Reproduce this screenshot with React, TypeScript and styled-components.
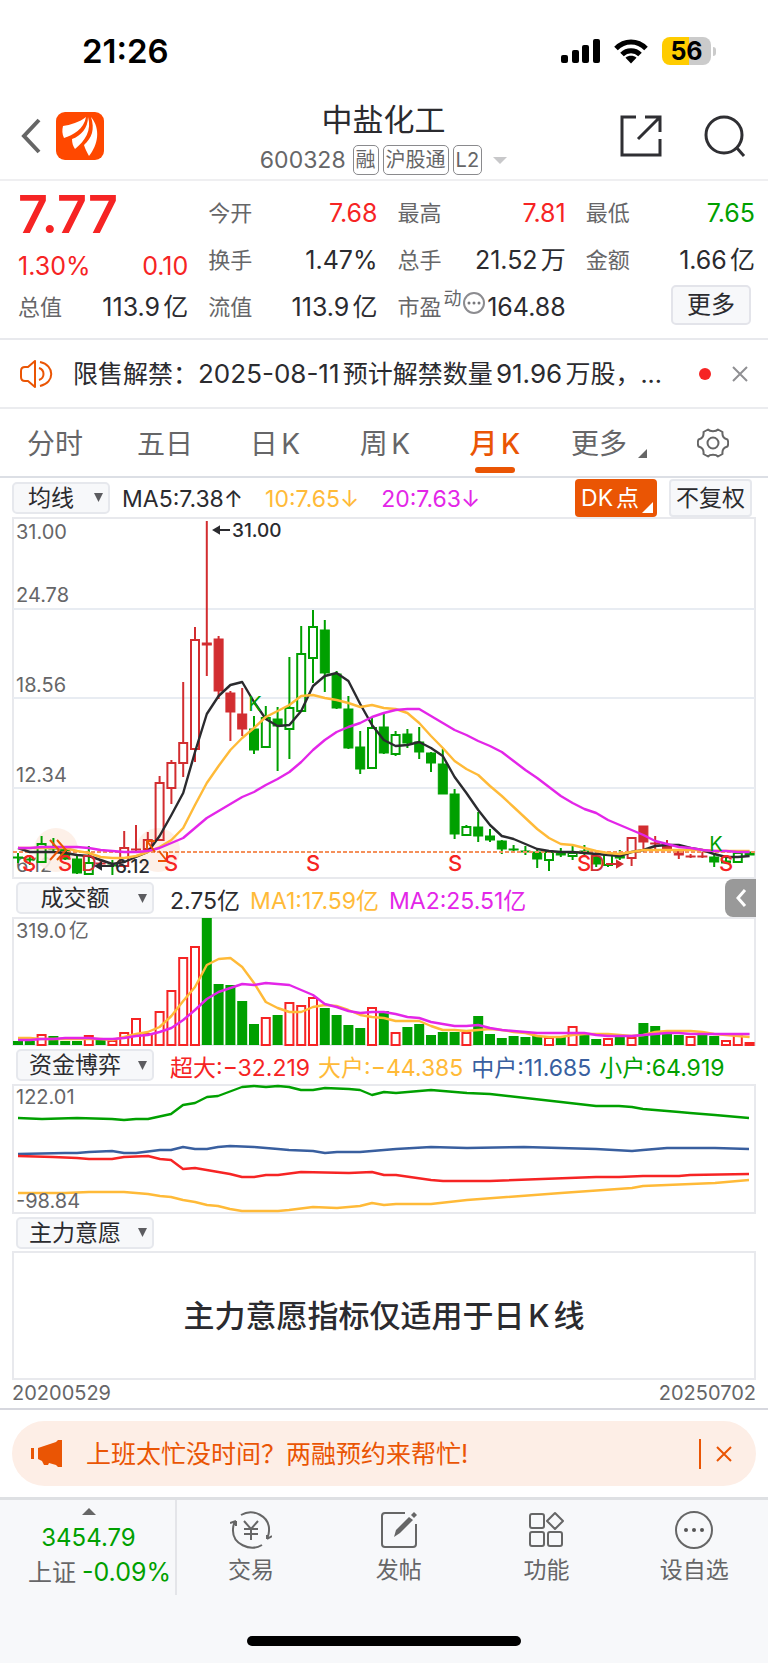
import React from "react";
import styled, { createGlobalStyle } from "styled-components";

const color = {
  ink: "#2b2b2f",
  gray: "#666668",
  red: "#f62424",
  candleRed: "#d22d30",
  green: "#00a000",
  orange: "#ea5504",
  amber: "#ffba38",
  magenta: "#e326e8",
  blue: "#395f9f",
  line: "#e8e9ed",
  soft: "#f7f8fa",
};

const GlobalStyle = createGlobalStyle`
  * { box-sizing: border-box; }
  body {
    margin: 0;
    background: #fff;
    color: ${color.ink};
    font-family: Inter, "Noto Sans CJK SC", sans-serif;
    font-size: 24px;
    text-autospace: normal;
  }
  button, select {
    margin: 0;
    padding: 0;
    border: 0;
    background: none;
    color: inherit;
    font: inherit;
    text-autospace: inherit;
    cursor: pointer;
  }
  a { color: inherit; text-decoration: none; }
  svg { display: block; flex: none; }
`;

const Page = styled.div`
  display: flex;
  flex-direction: column;
  min-height: 100vh;
`;

/* ---------- status bar ---------- */

const StatusBar = styled.div`
  display: flex;
  align-items: center;
  justify-content: space-between;
  height: 92px;
  padding: 10px 52px 0 82px;
  color: #000;
`;

const Clock = styled.time`
  font-size: 33px;
  font-weight: 600;
`;

const StatusIcons = styled.div`
  display: flex;
  align-items: center;
  gap: 14px;
`;

const Battery = styled.div`
  display: flex;
  align-items: center;
  gap: 2px;
`;

const BatteryBody = styled.div`
  width: 49px;
  height: 28px;
  border-radius: 8px;
  background: linear-gradient(to right, #ffcc00 56%, #cbcbcb 56%);
  font-size: 25px;
  font-weight: 700;
  line-height: 28px;
  text-align: center;
`;

const BatteryTip = styled.div`
  width: 3px;
  height: 9px;
  border-radius: 0 3px 3px 0;
  background: #cbcbcb;
`;

/* ---------- header ---------- */

const Header = styled.header`
  display: grid;
  grid-template-columns: 1fr auto 1fr;
  align-items: center;
  height: 89px;
  padding: 0 22px 0 21px;
  border-bottom: 2px solid #efeff1;
`;

const HeaderSide = styled.div<{ $end?: boolean }>`
  display: flex;
  align-items: center;
  justify-content: ${(p) => (p.$end ? "flex-end" : "flex-start")};
  gap: ${(p) => (p.$end ? 42 : 15)}px;
`;

const Heading = styled.div`
  display: flex;
  flex-direction: column;
  align-items: center;
  gap: 7px;
  padding-top: 6px;
`;

const StockName = styled.h1`
  margin: 0;
  font-size: 31px;
  font-weight: 400;
  line-height: 36px;
`;

const CodeLine = styled.div`
  display: flex;
  align-items: center;
  gap: 4px;
  color: ${color.gray};
  font-size: 23px;
  line-height: 30px;
`;

const Code = styled.span`
  padding-right: 3px;
`;

const Tag = styled.span`
  padding: 0 2px;
  border: 1px solid #8a8a8d;
  border-radius: 5px;
  font-size: 20px;
  line-height: 28px;
`;

const CaretButton = styled.button`
  padding-left: 7px;
`;

/* ---------- quote ---------- */

const Quote = styled.section`
  display: grid;
  grid-template-columns: 170fr 169fr 168fr 169fr;
  column-gap: 20px;
  height: 159px;
  padding: 8px 13px 8px 18px;
  border-bottom: 2px solid ${color.line};
`;

const QuoteColumn = styled.div`
  display: flex;
  flex-direction: column;
`;

const Price = styled.strong`
  height: 60px;
  color: ${color.red};
  font-size: 52px;
  font-weight: 600;
  line-height: 52px;
`;

const QuoteRow = styled.div<{ $tone?: string; $short?: boolean }>`
  display: flex;
  align-items: center;
  justify-content: space-between;
  height: ${(p) => (p.$short ? 34 : 47)}px;
  color: ${(p) => p.$tone ?? color.ink};
  font-size: 25px;
  line-height: 30px;
  white-space: nowrap;
`;

const QuoteLabel = styled.span`
  display: flex;
  align-items: center;
  color: ${color.gray};
  font-size: 22px;
`;

const Superscript = styled.sup`
  align-self: flex-start;
  padding-left: 2px;
  font-size: 18px;
  line-height: 14px;
`;

const InfoButton = styled.button`
  padding-bottom: 8px;
`;

const MoreButton = styled.button`
  width: 80px;
  height: 40px;
  margin: 0 4px 4px auto;
  border: 2px solid #e3e4ea;
  border-radius: 5px;
  background: ${color.soft};
  font-size: 24px;
  line-height: 34px;
`;

/* ---------- notice ---------- */

const Notice = styled.section`
  display: flex;
  align-items: center;
  height: 69px;
  padding: 0 20px;
  border-bottom: 2px solid #ebecef;
  font-size: 25px;
`;

const NoticeText = styled.a`
  flex: 1;
  margin-left: 20px;
  padding-bottom: 4px;
  overflow: hidden;
  text-overflow: ellipsis;
  white-space: nowrap;
`;

const Figure = styled.span`
  font-size: 26px;
`;

const Dot = styled.span`
  width: 12px;
  height: 12px;
  margin: 0 21px 0 24px;
  border-radius: 50%;
  background: ${color.red};
`;

/* ---------- tabs ---------- */

const Tabs = styled.nav`
  display: grid;
  grid-template-columns: repeat(5, 110fr) 118fr 90fr;
  height: 69px;
  padding-right: 10px;
  border-bottom: 2px solid #dcdfe5;
`;

const Tab = styled.button<{ $active?: boolean }>`
  display: flex;
  flex-direction: column;
  align-items: center;
  justify-content: flex-end;
  gap: 3px;
  padding-bottom: 3px;
  color: ${(p) => (p.$active ? color.orange : color.gray)};
  font-size: 28px;
  font-weight: ${(p) => (p.$active ? 500 : 400)};
  line-height: 40px;

  &::after {
    content: "";
    width: 40px;
    height: 6px;
    border-radius: 3px;
    background: ${(p) => (p.$active ? color.orange : "transparent")};
  }
`;

const TabMore = styled.span`
  display: flex;
  align-items: flex-end;
  gap: 11px;

  svg { margin-bottom: 6px; }
`;

const SettingsButton = styled.button`
  display: grid;
  place-items: center;
`;

/* ---------- charts ---------- */

const Charts = styled.main`
  padding: 0 12px;
`;

const ToolRow = styled.div<{ $inset?: boolean; $height?: number }>`
  display: flex;
  align-items: center;
  height: ${(p) => p.$height ?? 38}px;
  padding-left: ${(p) => (p.$inset ? 4 : 0)}px;
  white-space: nowrap;
`;

const Picker = styled.label<{ $wide?: boolean }>`
  display: grid;
  align-items: center;
  width: ${(p) => (p.$wide ? 138 : 98)}px;
  height: 32px;
  border: 2px solid #e6e8ed;
  border-radius: 5px;
  background: ${color.soft};

  > select, > svg { grid-area: 1 / 1; }
  > svg { justify-self: end; margin-right: 5px; pointer-events: none; }
`;

const PickerSelect = styled.select`
  width: 100%;
  height: 28px;
  padding-right: 20px;
  appearance: none;
  font-size: 23px;
  line-height: 28px;
  text-align: center;
  text-align-last: center;
`;

const Readings = styled.div<{ $gap: number; $indent: number }>`
  display: flex;
  flex: 1;
  gap: ${(p) => p.$gap}px;
  padding: 2px 0 0 ${(p) => p.$indent}px;
  font-size: 23px;
  text-autospace: no-autospace;
`;

const Reading = styled.span<{ $tone: string }>`
  color: ${(p) => p.$tone};
`;

const DkButton = styled.button`
  display: flex;
  align-items: flex-end;
  gap: 3px;
  height: 38px;
  padding: 0 4px 0 6px;
  border-radius: 4px;
  background: ${color.orange};
  color: #fff;
  font-size: 23px;
  line-height: 38px;

  svg { margin-bottom: 4px; }
`;

const AdjustButton = styled.button`
  height: 38px;
  margin: 0 4px 0 12px;
  padding: 0 5px;
  border: 2px solid #e6e8ed;
  border-radius: 4px;
  background: ${color.soft};
  font-size: 23px;
  line-height: 34px;
`;

const CollapseButton = styled.button`
  display: grid;
  place-items: center;
  width: 31px;
  height: 38px;
  border-radius: 8px 0 0 8px;
  background: #999;
`;

const Plot = styled.svg`
  width: 100%;
  height: auto;
  font-family: Inter, "Noto Sans CJK SC", sans-serif;
`;

const EmptyPanel = styled.div`
  display: grid;
  place-items: center;
  height: 129px;
  padding-bottom: 4px;
  border: 2px solid ${color.line};
  font-size: 31px;
  font-weight: 500;
`;

const DateRow = styled.div`
  display: flex;
  justify-content: space-between;
  height: 28px;
  color: ${color.gray};
  font-size: 20px;
  line-height: 26px;
`;

/* ---------- banner ---------- */

const BannerArea = styled.aside`
  padding: 11px 12px;
  border-top: 2px solid #d6d7de;
`;

const Banner = styled.div`
  display: flex;
  align-items: center;
  height: 65px;
  padding: 0 24px 0 19px;
  border-radius: 33px;
  background: #fdeee6;
  color: ${color.orange};
  font-size: 25px;
`;

const BannerLink = styled.a`
  flex: 1;
  margin-left: 24px;
  padding-bottom: 4px;
`;

const BannerClose = styled.button`
  display: flex;
  align-items: center;
  height: 30px;
  padding-left: 15px;
  border-left: 2px solid ${color.orange};
`;

/* ---------- bottom bar ---------- */

const BottomBar = styled.footer`
  display: flex;
  flex: 1;
  flex-direction: column;
  justify-content: space-between;
  border-top: 3px solid #dee0e3;
  background: ${color.soft};
`;

const Actions = styled.div`
  display: grid;
  grid-template-columns: 177px repeat(4, 1fr);
  height: 95px;
`;

const IndexCell = styled.button`
  display: flex;
  flex-direction: column;
  align-items: center;
  padding: 8px 2px 0 26px;
  border-right: 2px solid #e4e5e9;
  color: ${color.green};
  line-height: 35px;
  white-space: nowrap;

  svg { margin: 0 22px 6px 0; }
`;

const IndexValue = styled.span`
  margin-right: 22px;
  line-height: 34px;
`;

const IndexChange = styled.span`
  font-size: 25px;
`;

const IndexName = styled.span`
  margin-right: 6px;
  color: ${color.gray};
  font-size: 24px;
`;

const Action = styled.button`
  display: flex;
  flex-direction: column;
  align-items: center;
  gap: 5px;
  padding-top: 11px;
  color: ${color.gray};
  font-size: 23px;
  line-height: 32px;
`;

const HomeIndicator = styled.div`
  align-self: center;
  width: 274px;
  height: 10px;
  margin-bottom: 17px;
  border-radius: 5px;
  background: #000;
`;

/* ---------- chart data ---------- */

const FIRST_X = 18;
const STEP = 11.8;
const xAt = (i: number) => FIRST_X + STEP * i;

type Kind = "up" | "down" | "rise" | "fall";
/* body top, body bottom, wick top, wick bottom, kind
   up / down: hollow or solid green; rise / fall: hollow or solid red */
type Candle = [number, number, number, number, Kind];

const candles: Candle[] = [
  [857, 858, 853, 863, "down"], [859, 860, 855, 865, "down"], [844, 862, 836, 862, "up"],
  [847, 849, 838, 851, "down"], [849, 859, 848, 860, "down"], [859, 873, 855, 874, "down"],
  [863, 874, 846, 875, "up"], [863, 864, 860, 867, "fall"], [865, 866, 860, 875, "down"],
  [848, 866, 831, 868, "rise"], [849, 850, 825, 852, "fall"], [840, 849, 832, 850, "rise"],
  [783, 840, 776, 840, "rise"], [763, 788, 760, 804, "rise"], [743, 763, 682, 777, "rise"],
  [640, 749, 627, 762, "rise"], [643, 645, 521, 676, "fall"], [639, 691, 636, 699, "fall"],
  [693, 712, 691, 741, "fall"], [714, 729, 688, 736, "fall"], [729, 750, 716, 754, "down"],
  [718, 747, 706, 747, "up"], [719, 726, 707, 771, "down"], [708, 729, 657, 759, "up"],
  [654, 711, 626, 711, "up"], [627, 658, 610, 683, "up"], [630, 673, 620, 692, "down"],
  [674, 708, 671, 709, "down"], [709, 748, 696, 749, "down"], [747, 769, 731, 774, "down"],
  [728, 768, 718, 768, "up"], [727, 753, 713, 754, "down"], [735, 754, 731, 756, "up"],
  [734, 743, 729, 748, "down"], [742, 752, 727, 759, "down"], [753, 763, 752, 772, "down"],
  [764, 794, 749, 794, "down"], [794, 834, 789, 839, "down"], [827, 835, 825, 836, "up"],
  [827, 836, 812, 842, "down"], [836, 840, 829, 842, "down"], [841, 849, 840, 854, "down"],
  [849, 850, 845, 852, "down"], [851, 852, 846, 855, "down"], [852, 859, 848, 868, "down"],
  [852, 860, 850, 871, "up"], [853, 855, 848, 857, "down"], [853, 856, 844, 860, "up"],
  [851, 853, 845, 855, "down"], [857, 864, 855, 867, "down"], [855, 865, 854, 867, "up"],
  [856, 858, 850, 860, "down"], [838, 858, 837, 866, "rise"], [826, 842, 826, 851, "fall"],
  [843, 844, 836, 849, "fall"], [845, 849, 840, 849, "fall"], [851, 855, 850, 859, "fall"],
  [856, 857, 854, 858, "fall"], [856, 857, 852, 858, "fall"], [857, 862, 855, 867, "down"],
  [861, 863, 858, 864, "down"], [853, 862, 853, 862, "up"], [852, 855, 852, 855, "down"],
];

const ma5 = [
  848, 852, 852, 852, 853, 855, 856, 860, 864, 862, 857, 852, 836, 815, 793, 752, 714, 696, 685, 682, 702,
  719, 726, 725, 711, 686, 676, 673, 681, 704, 725, 740, 746, 745, 742, 748, 756, 777, 793, 810, 825, 836,
  839, 844, 849, 851, 852, 852, 853, 854, 855, 856, 852, 850, 846, 845, 845, 848, 850, 854, 857, 857, 856,
];
const ma10 = [
  848, 848, 848, 848, 848, 851, 853, 857, 858, 858, 856, 852, 847, 840, 828, 805, 783, 766, 750, 738, 728,
  717, 711, 705, 696, 695, 698, 700, 703, 707, 705, 708, 709, 713, 723, 736, 748, 761, 769, 775, 786, 796,
  807, 818, 829, 838, 844, 845, 848, 851, 853, 854, 852, 850, 850, 850, 850, 850, 850, 851, 851, 851, 851,
];
const ma20 = [
  848, 848, 847, 847, 847, 847, 848, 850, 851, 852, 852, 851, 848, 843, 838, 828, 818, 811, 804, 797, 792,
  785, 779, 772, 762, 750, 740, 732, 727, 723, 717, 713, 710, 709, 709, 716, 723, 730, 735, 741, 746, 752,
  761, 770, 778, 787, 796, 803, 809, 813, 820, 825, 830, 835, 841, 844, 847, 848, 850, 851, 851, 852, 852,
];

/* bar top; a negative value is a hollow red bar */
const turnover = [
  1041, 1041, -1034, 1036, 1041, 1041, -1035, 1040, -1040, -1032, -1018, -1033, -1011, -990, -957, -946, 918,
  984, 985, 1001, 1024, -1017, 1015, -1002, -1005, -997, 1008, 1015, 1025, 1028, -1007, 1011, -1032, 1027,
  1024, 1035, 1032, 1032, -1032, 1016, 1034, 1038, 1036, 1037, 1036, -1037, 1036, -1026, 1035, 1039, -1038,
  1037, -1037, 1023, 1026, 1034, 1035, -1036, 1033, 1036, -1040, -1034, -1042,
];
const turnoverMa1 = [
  1038, 1038, 1039, 1039, 1039, 1039, 1039, 1039, 1040, 1037, 1034, 1032, 1027, 1016, 1001, 987, 965, 959,
  958, 967, 983, 1002, 1008, 1012, 1012, 1007, 1005, 1006, 1010, 1015, 1017, 1018, 1021, 1021, 1021, 1026,
  1030, 1030, 1031, 1030, 1029, 1030, 1032, 1033, 1036, 1037, 1037, 1035, 1034, 1034, 1034, 1035, 1036,
  1035, 1032, 1031, 1031, 1031, 1032, 1034, 1035, 1036, 1037,
];
const turnoverMa2 = [
  1040, 1040, 1039, 1039, 1038, 1038, 1038, 1039, 1039, 1038, 1036, 1035, 1032, 1028, 1020, 1010, 999, 992,
  988, 984, 985, 983, 984, 985, 990, 995, 1004, 1007, 1011, 1013, 1012, 1012, 1014, 1017, 1018, 1022, 1024,
  1026, 1026, 1025, 1028, 1030, 1031, 1032, 1033, 1033, 1033, 1033, 1033, 1035, 1036, 1036, 1036, 1035,
  1034, 1033, 1033, 1034, 1034, 1034, 1034, 1034, 1034,
];

const flows = [
  {
    tone: color.green,
    points:
      "18,1118 42,1119 77,1118 112,1119 124,1120 136,1119 148,1119 171,1114 183,1105 195,1103 207,1097 218,1096 242,1087 254,1086 266,1087 278,1086 289,1087 301,1090 313,1090 325,1088 349,1089 360,1090 372,1095 384,1092 396,1093 431,1090 443,1091 467,1093 490,1094 561,1102 596,1106 619,1106 632,1107 643,1109 679,1112 690,1113 715,1115 749,1118",
  },
  {
    tone: color.blue,
    points:
      "18,1154 65,1153 77,1153 89,1152 112,1151 124,1153 136,1153 160,1150 171,1150 183,1147 195,1149 207,1149 218,1147 230,1146 254,1147 278,1149 289,1150 313,1151 325,1153 337,1152 360,1152 384,1150 396,1149 431,1147 467,1148 524,1147 596,1149 632,1151 643,1150 667,1148 715,1148 749,1149",
  },
  {
    tone: color.red,
    points:
      "18,1156 53,1157 77,1158 89,1159 112,1159 124,1157 148,1156 160,1159 171,1160 183,1169 195,1168 230,1174 242,1177 254,1177 266,1175 278,1175 301,1172 349,1173 372,1172 384,1175 396,1175 431,1180 443,1181 490,1181 596,1177 619,1177 643,1176 679,1176 690,1175 749,1174",
  },
  {
    tone: color.amber,
    points:
      "18,1193 65,1193 89,1192 124,1192 136,1193 148,1194 160,1196 171,1197 183,1200 195,1202 207,1205 218,1206 230,1209 242,1211 254,1211 278,1211 289,1210 313,1207 337,1208 360,1206 372,1203 384,1205 396,1204 431,1204 467,1200 561,1193 632,1188 643,1186 715,1183 749,1180",
  },
];

const signals: { x: number; y: number; mark: "S" | "D" | "K" }[] = [
  { x: 29, y: 871, mark: "S" }, { x: 65, y: 871, mark: "S" }, { x: 171, y: 871, mark: "S" },
  { x: 313, y: 871, mark: "S" }, { x: 455, y: 871, mark: "S" }, { x: 584, y: 871, mark: "S" },
  { x: 726, y: 871, mark: "S" }, { x: 89, y: 871, mark: "D" }, { x: 597, y: 871, mark: "D" },
  { x: 255, y: 711, mark: "K" }, { x: 716, y: 851, mark: "K" },
];

const toPoints = (ys: number[]) => ys.map((y, i) => `${xAt(i).toFixed(1)},${y}`).join(" ");

const Line = ({ points, tone }: { points: string; tone: string }) => (
  <polyline points={points} fill="none" stroke={tone} strokeWidth="2.4" strokeLinejoin="round" />
);

const Frame = ({ top, height }: { top: number; height: number }) => (
  <rect x="13" y={top + 1} width="742" height={height - 2} fill="none" stroke={color.line} strokeWidth="2" />
);

const PriceChart = () => (
  <Plot viewBox="12 517 744 362" role="img" aria-label="月K线">
    <Frame top={517} height={362} />
    {[609, 698, 788].map((y) => (
      <path key={y} d={`M13 ${y}H755`} stroke="#e8ecf2" strokeWidth="2" />
    ))}
    <g fill={color.gray} fontSize="20">
      <text x="16" y="539">31.00</text>
      <text x="16" y="602">24.78</text>
      <text x="16" y="692">18.56</text>
      <text x="16" y="782">12.34</text>
      <text x="16" y="872">6.12</text>
    </g>
    <g fill="#fdeee6" fillOpacity=".9">
      <circle cx="56" cy="850" r="22" />
      <circle cx="158" cy="850" r="22" />
    </g>
    {candles.map(([top, bottom, high, low, kind], i) => {
      const tone = kind === "up" || kind === "down" ? color.green : color.candleRed;
      const hollow = kind === "up" || kind === "rise";
      const x = xAt(i);
      return (
        <g key={i} stroke={tone} strokeWidth="2">
          <path d={`M${x} ${high}V${top}M${x} ${bottom}V${low}`} />
          <rect
            x={x - (hollow ? 4 : 4.5)}
            y={top}
            width={hollow ? 8 : 9}
            height={bottom - top}
            fill={hollow ? "none" : tone}
            strokeWidth={hollow ? 2 : 1}
          />
        </g>
      );
    })}
    <path d="M13 852H755" stroke="#f5905a" strokeWidth="2" strokeDasharray="4 2" />
    <Line points={toPoints(ma5)} tone={color.ink} />
    <Line points={toPoints(ma10)} tone={color.amber} />
    <Line points={toPoints(ma20)} tone={color.magenta} />
    <g fill="none" stroke={color.orange} strokeWidth="2">
      <path d="M50 840L59 850L50 860M57 840L66 850L57 860" />
      <path d="M155 852L147 841M147 849V841H155M158 861H167V852M167 861L159 851" />
    </g>
    <g textAnchor="middle">
      {signals.map(({ x, y, mark }) => (
        <text
          key={`${mark}${x}`}
          x={x}
          y={y}
          fontSize={mark === "K" ? 20 : 22}
          fontWeight={mark === "S" ? 500 : 400}
          fill={mark === "K" ? color.green : mark === "S" ? color.red : color.candleRed}
        >
          {mark}
        </text>
      ))}
    </g>
    <g stroke={color.ink} strokeWidth="2" fill={color.ink}>
      <path d="M216 530H230M219 527L214 530L219 533Z" />
      <path d="M98 866H114M101 863L96 866L101 869Z" />
    </g>
    <path d="M606 864H619M617 861L622 864L617 867Z" stroke={color.candleRed} fill={color.candleRed} strokeWidth="2" />
    <g fill={color.ink} fontSize="19" fontWeight="500">
      <text x="232" y="537">31.00</text>
      <text x="115" y="873">6.12</text>
    </g>
  </Plot>
);

const TurnoverChart = () => (
  <Plot viewBox="12 917 744 129" role="img" aria-label="成交额">
    <Frame top={917} height={129} />
    {turnover.map((value, i) => {
      const top = Math.abs(value);
      const hollow = value < 0;
      return (
        <rect
          key={i}
          x={xAt(i) - (hollow ? 4 : 5)}
          y={hollow ? top + 1 : top}
          width={hollow ? 8 : 10}
          height={hollow ? 1044 - top : 1045 - top}
          fill={hollow ? "#fff" : color.green}
          stroke={hollow ? color.red : "none"}
          strokeWidth="2"
        />
      );
    })}
    <Line points={toPoints(turnoverMa1)} tone={color.amber} />
    <Line points={toPoints(turnoverMa2)} tone={color.magenta} />
    <text x="16" y="938" fill={color.gray} fontSize="20">319.0亿</text>
  </Plot>
);

const FlowChart = () => (
  <Plot viewBox="12 1084 744 130" role="img" aria-label="资金博弈">
    <Frame top={1084} height={130} />
    {flows.map((flow) => (
      <Line key={flow.tone} points={flow.points} tone={flow.tone} />
    ))}
    <g fill={color.gray} fontSize="20">
      <text x="16" y="1104">122.01</text>
      <text x="16" y="1208">-98.84</text>
    </g>
  </Plot>
);

/* ---------- icons ---------- */

const Signal = () => (
  <svg width="39" height="25" viewBox="0 0 39 25">
    <rect x="0" y="16" width="7" height="8" rx="2" />
    <rect x="11" y="11" width="7" height="13" rx="2" />
    <rect x="21" y="6" width="7" height="18" rx="2" />
    <rect x="32" y="0" width="7" height="24" rx="2" />
  </svg>
);

const Wifi = () => (
  <svg width="34" height="25" viewBox="0 0 34 25">
    <g fill="none" stroke="#000" strokeWidth="5">
      <path d="M2 9.500C10.500 .8 23.500 .8 32 9.500" />
      <path d="M8 15.500C13 10.500 21 10.500 26 15.500" />
    </g>
    <path d="M17 24.500L11.500 18.800C14.500 16.200 19.500 16.200 22.500 18.800Z" />
  </svg>
);

const Back = () => (
  <svg width="20" height="36" viewBox="0 0 20 36" fill="none" stroke="#666" strokeWidth="4">
    <path d="M18 2L3 18L18 34" />
  </svg>
);

const Logo = () => (
  <svg width="48" height="48" viewBox="0 0 48 48">
    <rect width="48" height="48" rx="9" fill="#ff4800" />
    <g fill="#fff">
      <path d="M30 5C24 10 14 13 7 14C6 18 6 22 8 26C17 23 28 17 30 5Z" />
      <path d="M32 5C32 16 25 24 16 27C16 31 17 34 19 37C29 29 36 18 32 5Z" />
      <path d="M35 5C39 17 36 26 28 33C29 37 31 40 33 44C42 33 45 17 35 5Z" />
    </g>
  </svg>
);

const Share = () => (
  <svg width="42" height="42" viewBox="0 0 42 42" fill="none" stroke="#2f2f33" strokeWidth="3">
    <path d="M16 2H2V40H40V24M25 2H40V17M40 2L18 24" />
  </svg>
);

const Search = () => (
  <svg width="42" height="42" viewBox="0 0 42 42" fill="none" stroke="#2f2f33" strokeWidth="3">
    <circle cx="20" cy="20" r="18" />
    <path d="M32 32L40 41" />
  </svg>
);

const Triangle = ({ fill = "#5c5c60", width = 9, height = 9 }: { fill?: string; width?: number; height?: number }) => (
  <svg width={width} height={height} viewBox="0 0 10 10" preserveAspectRatio="none">
    <path d="M0 0H10L5 10Z" fill={fill} />
  </svg>
);

const Corner = ({ fill, size }: { fill: string; size: number }) => (
  <svg width={size} height={size} viewBox="0 0 10 10">
    <path d="M10 0V10H0Z" fill={fill} />
  </svg>
);

const Cross = ({ stroke }: { stroke: string }) => (
  <svg width="16" height="16" viewBox="0 0 16 16" stroke={stroke} strokeWidth="2">
    <path d="M1 1L15 15M15 1L1 15" />
  </svg>
);

const Speaker = () => (
  <svg width="33" height="28" viewBox="0 0 33 28" fill="none" stroke={color.orange} strokeWidth="2">
    <path d="M5 7H8L15 1V27L8 21H5C2 21 1 19 1 17V11C1 9 2 7 5 7Z" strokeLinejoin="round" />
    <path d="M19 8C25 10 25 18 19 20M20 2C35 5 35 23 20 26" />
  </svg>
);

const InfoDots = () => (
  <svg width="22" height="22" viewBox="0 0 22 22">
    <circle cx="11" cy="11" r="10" fill="none" stroke="#8c8c90" strokeWidth="2" />
    <g fill="#77777b">
      <circle cx="6" cy="11" r="1.500" />
      <circle cx="11" cy="11" r="1.500" />
      <circle cx="16" cy="11" r="1.500" />
    </g>
  </svg>
);

const Gear = () => (
  <svg width="32" height="30" viewBox="0 0 32 30" fill="none" stroke="#666" strokeWidth="2">
    <path d="M11 1.500C13 3.800 19 3.800 21 1.500L25.500 4C25 8 26.500 10.500 30.500 11.500C31.500 14 31.500 16 30.500 18.500C26.500 19.500 25 22 25.500 26L21 28.500C19 26.200 13 26.200 11 28.500L6.500 26C7 22 5.500 19.500 1.500 18.500C.5 16 .5 14 1.500 11.500C5.500 10.500 7 8 6.500 4Z" strokeLinejoin="round" />
    <circle cx="16" cy="15" r="5.500" />
  </svg>
);

const Chevron = () => (
  <svg width="12" height="20" viewBox="0 0 12 20" fill="none" stroke="#fff" strokeWidth="3">
    <path d="M10 2L3 10L10 18" />
  </svg>
);

const Horn = () => (
  <svg width="31" height="27" viewBox="0 0 31 27" fill={color.orange}>
    <path d="M0 8H3V19H0ZM7 8L25 2L27 0H31V27H27L25 25L18 23L17 25H13L11 21L7 19Z" />
  </svg>
);

const Trade = () => (
  <svg width="42" height="38" viewBox="0 0 42 38" fill="none" stroke="#666" strokeWidth="2">
    <path d="M11 4C23-3 40 5 39 20C39 23 38 25 37 28M37 28V24M37 28L42 25M32 34C20 41 2 33 3 18C3 15 4 12 6 10M6 10L0 12M6 10V15" />
    <path d="M14 10L21 18L28 10M21 18V29M14 18H28M14 23H28" />
  </svg>
);

const Post = () => (
  <svg width="38" height="38" viewBox="0 0 38 38" fill="none" stroke="#666" strokeWidth="2">
    <path d="M25 2H5Q2 2 2 5V33Q2 36 5 36H33Q36 36 36 33V13" />
    <path d="M14 26L16 19L29 6L33 9L20 22Z" fill="#666" stroke="none" />
    <path d="M31 4L34 1L37 4L34 7Z" fill="#666" stroke="none" />
  </svg>
);

const Functions = () => (
  <svg width="38" height="38" viewBox="0 0 38 38" fill="none" stroke="#666" strokeWidth="2">
    <rect x="3" y="3" width="14" height="14" rx="2" />
    <rect x="3" y="21" width="14" height="14" rx="2" />
    <rect x="21" y="21" width="14" height="14" rx="2" />
    <path d="M28 2L36 10L28 18L20 10Z" strokeLinejoin="round" />
  </svg>
);

const More = () => (
  <svg width="38" height="38" viewBox="0 0 38 38">
    <circle cx="19" cy="19" r="18" fill="none" stroke="#666" strokeWidth="2" />
    <g fill="#555">
      <circle cx="11" cy="19" r="2" />
      <circle cx="19" cy="19" r="2" />
      <circle cx="27" cy="19" r="2" />
    </g>
  </svg>
);

const IndicatorPicker = ({ name, wide }: { name: string; wide?: boolean }) => (
  <Picker $wide={wide}>
    <PickerSelect aria-label={name} defaultValue={name}>
      <option>{name}</option>
    </PickerSelect>
    <Triangle />
  </Picker>
);

const periods = ["分时", "五日", "日K", "周K", "月K"];

const actions = [
  { label: "交易", Icon: Trade },
  { label: "发帖", Icon: Post },
  { label: "功能", Icon: Functions },
  { label: "设自选", Icon: More },
];

export default function App() {
  return (
    <Page>
      <GlobalStyle />
      <StatusBar>
        <Clock>21:26</Clock>
        <StatusIcons>
          <Signal />
          <Wifi />
          <Battery>
            <BatteryBody>56</BatteryBody>
            <BatteryTip />
          </Battery>
        </StatusIcons>
      </StatusBar>

      <Header>
        <HeaderSide>
          <button aria-label="返回"><Back /></button>
          <Logo />
        </HeaderSide>
        <Heading>
          <StockName>中盐化工</StockName>
          <CodeLine>
            <Code>600328</Code>
            <Tag>融</Tag>
            <Tag>沪股通</Tag>
            <Tag>L2</Tag>
            <CaretButton aria-label="切换股票"><Triangle fill="#c8c8ca" width={14} height={7} /></CaretButton>
          </CodeLine>
        </Heading>
        <HeaderSide $end>
          <button aria-label="分享"><Share /></button>
          <button aria-label="搜索"><Search /></button>
        </HeaderSide>
      </Header>

      <Quote>
        <QuoteColumn>
          <Price>7.77</Price>
          <QuoteRow $tone={color.red} $short><span>1.30%</span><span>0.10</span></QuoteRow>
          <QuoteRow><QuoteLabel>总值</QuoteLabel><span>113.9亿</span></QuoteRow>
        </QuoteColumn>
        <QuoteColumn>
          <QuoteRow $tone={color.red}><QuoteLabel>今开</QuoteLabel><span>7.68</span></QuoteRow>
          <QuoteRow><QuoteLabel>换手</QuoteLabel><span>1.47%</span></QuoteRow>
          <QuoteRow><QuoteLabel>流值</QuoteLabel><span>113.9亿</span></QuoteRow>
        </QuoteColumn>
        <QuoteColumn>
          <QuoteRow $tone={color.red}><QuoteLabel>最高</QuoteLabel><span>7.81</span></QuoteRow>
          <QuoteRow><QuoteLabel>总手</QuoteLabel><span>21.52万</span></QuoteRow>
          <QuoteRow>
            <QuoteLabel>市盈<Superscript>动</Superscript></QuoteLabel>
            <InfoButton aria-label="市盈率说明"><InfoDots /></InfoButton>
            <span>164.88</span>
          </QuoteRow>
        </QuoteColumn>
        <QuoteColumn>
          <QuoteRow $tone={color.green}><QuoteLabel>最低</QuoteLabel><span>7.65</span></QuoteRow>
          <QuoteRow><QuoteLabel>金额</QuoteLabel><span>1.66亿</span></QuoteRow>
          <QuoteRow><MoreButton>更多</MoreButton></QuoteRow>
        </QuoteColumn>
      </Quote>

      <Notice>
        <Speaker />
        <NoticeText href="#notice">
          限售解禁：<Figure>2025-08-11</Figure>预计解禁数量<Figure>91.96</Figure>万股，...
        </NoticeText>
        <Dot />
        <button aria-label="关闭公告"><Cross stroke="#8f8f93" /></button>
      </Notice>

      <Tabs>
        {periods.map((name) => (
          <Tab key={name} $active={name === "月K"}>{name}</Tab>
        ))}
        <Tab>
          <TabMore>更多<Corner fill="#666" size={9} /></TabMore>
        </Tab>
        <SettingsButton aria-label="设置"><Gear /></SettingsButton>
      </Tabs>

      <Charts>
        <ToolRow $height={39}>
          <IndicatorPicker name="均线" />
          <Readings $gap={22} $indent={12}>
            <Reading $tone={color.ink}>MA5:7.38↑</Reading>
            <Reading $tone={color.amber}>10:7.65↓</Reading>
            <Reading $tone={color.magenta}>20:7.63↓</Reading>
          </Readings>
          <DkButton>DK点<Corner fill="#fff" size={11} /></DkButton>
          <AdjustButton>不复权</AdjustButton>
        </ToolRow>
        <PriceChart />

        <ToolRow $inset>
          <IndicatorPicker name="成交额" wide />
          <Readings $gap={10} $indent={16}>
            <Reading $tone={color.ink}>2.75亿</Reading>
            <Reading $tone={color.amber}>MA1:17.59亿</Reading>
            <Reading $tone={color.magenta}>MA2:25.51亿</Reading>
          </Readings>
          <CollapseButton aria-label="展开侧栏"><Chevron /></CollapseButton>
        </ToolRow>
        <TurnoverChart />

        <ToolRow $inset>
          <IndicatorPicker name="资金博弈" wide />
          <Readings $gap={8} $indent={16}>
            <Reading $tone={color.red}>超大:−32.219</Reading>
            <Reading $tone={color.amber}>大户:−44.385</Reading>
            <Reading $tone={color.blue}>中户:11.685</Reading>
            <Reading $tone={color.green}>小户:64.919</Reading>
          </Readings>
        </ToolRow>
        <FlowChart />

        <ToolRow $inset $height={37}>
          <IndicatorPicker name="主力意愿" wide />
        </ToolRow>
        <EmptyPanel>主力意愿指标仅适用于日K线</EmptyPanel>
        <DateRow><span>20200529</span><span>20250702</span></DateRow>
      </Charts>

      <BannerArea>
        <Banner>
          <Horn />
          <BannerLink href="#margin">上班太忙没时间？两融预约来帮忙!</BannerLink>
          <BannerClose aria-label="关闭广告"><Cross stroke={color.orange} /></BannerClose>
        </Banner>
      </BannerArea>

      <BottomBar>
        <Actions>
          <IndexCell>
            <svg width="14" height="7" viewBox="0 0 14 7"><path d="M7 0L14 7H0Z" fill="#666" /></svg>
            <IndexValue>3454.79</IndexValue>
            <IndexChange><IndexName>上证</IndexName>-0.09%</IndexChange>
          </IndexCell>
          {actions.map(({ label, Icon }) => (
            <Action key={label}><Icon />{label}</Action>
          ))}
        </Actions>
        <HomeIndicator />
      </BottomBar>
    </Page>
  );
}
